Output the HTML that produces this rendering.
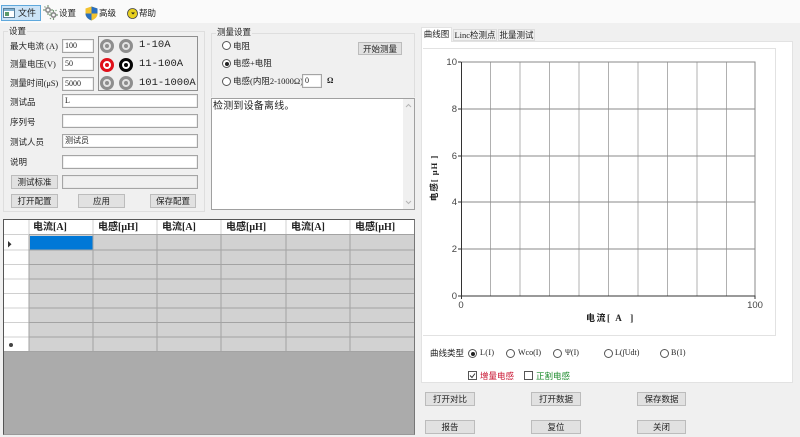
<!DOCTYPE html>
<html><head><meta charset="utf-8"><style>
html,body{margin:0;padding:0}
body{width:800px;height:437px;overflow:hidden;background:#f0f0f0;position:relative;font-family:"Liberation Serif","Noto Sans CJK SC",sans-serif;font-size:8.5px;color:#222}
#w{position:absolute;left:0;top:0;width:800px;height:437px;filter:blur(.35px)}
.a{position:absolute;white-space:nowrap}
.i{position:absolute;background:#fff;border:1px solid #a5a5a5;box-shadow:inset 0 0 0 .5px #e0e0e0;box-sizing:border-box;font-size:8px;line-height:11px;padding-left:2px;white-space:nowrap}
.b{position:absolute;background:#e1e1e1;border:1px solid #bcbcbc;box-sizing:border-box;text-align:center;font-size:8.5px;line-height:12px;white-space:nowrap}
.g{position:absolute;border:1px solid #dedede;box-sizing:border-box}
.r{position:absolute;width:9px;height:9px;border:1px solid #555;border-radius:50%;background:#fff;box-sizing:border-box}
.r.on:after{content:"";position:absolute;left:1.5px;top:1.5px;width:4px;height:4px;border-radius:50%;background:#222}
.c{position:absolute;width:14px;height:14px;border-radius:50%;box-sizing:border-box;border:3.5px solid #8e8e8e;background:#e4e4e4}
.c:after{content:"";position:absolute;left:1.5px;top:1.5px;width:4px;height:4px;border-radius:50%;background:#8e8e8e}
.c.red{border-color:#e0101a;background:#fff}.c.red:after{background:#e0101a}
.c.blk{border-color:#050505;background:#fff}.c.blk:after{background:#050505}
.h{position:absolute;top:220px;height:15px;font-weight:bold;font-size:10px;line-height:15px;white-space:nowrap}
</style></head><body><div id="w">
<div class="a" style="left:0;top:0;width:800px;height:23px;background:#fafafa"></div>
<div class="a" style="left:1px;top:5px;width:40px;height:16px;background:#cce4f7;border:1px solid #5fa8dc;box-sizing:border-box"></div>
<svg class="a" style="left:3px;top:8px" width="12" height="11"><rect x=".5" y=".5" width="11" height="9" fill="#fff" stroke="#5a7f9a"/><rect x="1" y="1" width="10" height="2" fill="#7fb0d0"/><rect x="2" y="4" width="4" height="4" fill="#5b9a6a"/></svg>
<div class="a" style="left:18px;top:7px;font-size:9px;line-height:12px">文件</div>
<svg class="a" style="left:43px;top:5px" width="15" height="15"><g fill="none" stroke="#8a8a8a" stroke-width="1.600"><circle cx="5" cy="5" r="2.200"/><circle cx="10.500" cy="10" r="2.200"/></g><g fill="none" stroke="#7a9a7a" stroke-width="1.200"><path d="M5 0v2M5 8v2M0 5h2M8 5h2M10.500 5v2M10.500 13v2M6 10h2M13 10h2M1.500 1.500l1 1M7.500 7.500l1 1M12.500 6l1-1M7 14l1-1"/></g></svg>
<div class="a" style="left:59px;top:7px;font-size:8.500px;line-height:12px">设置</div>
<svg class="a" style="left:85px;top:6px" width="13" height="15"><path d="M6.500 .5 L12.500 2.500 V8 C12.500 11 9.500 13.500 6.500 14.500 C3.500 13.500 .5 11 .5 8 V2.500Z" fill="#f2c230"/><path d="M6.500 .5 L12.500 2.500 V7.500 H6.500Z" fill="#2a6fc0"/><path d="M6.500 7.500 V14.500 C3.500 13.500 .5 11 .5 7.500Z" fill="#2a6fc0"/></svg>
<div class="a" style="left:99px;top:7px;font-size:8.500px;line-height:12px">高级</div>
<svg class="a" style="left:127px;top:8px" width="11" height="11"><circle cx="5.500" cy="5.500" r="5" fill="#e8d020" stroke="#444" stroke-width=".8"/><path d="M4 4.500h4l-2 2z" fill="#222"/></svg>
<div class="a" style="left:139px;top:7px;font-size:8.500px;line-height:12px">帮助</div>

<div class="g" style="left:3px;top:31px;width:202px;height:181px"></div>
<div class="a" style="left:8px;top:25px;background:#f0f0f0;padding:0 1px;line-height:12px">设置</div>
<div class="a" style="left:10px;top:40px;line-height:12px">最大电流 (A)</div>
<div class="i" style="left:62px;top:39px;width:32px;height:14px">100</div>
<div class="a" style="left:10px;top:58px;line-height:12px">测量电压(V)</div>
<div class="i" style="left:62px;top:57px;width:32px;height:14px">50</div>
<div class="a" style="left:10px;top:77px;line-height:12px;letter-spacing:-.1px">测量时间(μS)</div>
<div class="i" style="left:62px;top:77px;width:32px;height:14px">5000</div>
<div class="a" style="left:98px;top:36px;width:100px;height:55px;background:#efefef;border:1px solid #8f8f8f;box-sizing:border-box"></div>
<div class="c" style="left:100px;top:39px"></div><div class="c" style="left:119px;top:39px"></div>
<div class="c red" style="left:100px;top:58px"></div><div class="c blk" style="left:119px;top:58px"></div>
<div class="c" style="left:100px;top:76px"></div><div class="c" style="left:119px;top:76px"></div>
<div class="a" style="left:139px;top:38px;font-family:'Liberation Mono';font-size:10.500px;line-height:15px">1-10A</div>
<div class="a" style="left:139px;top:57px;font-family:'Liberation Mono';font-size:10.500px;line-height:15px">11-100A</div>
<div class="a" style="left:139px;top:76px;font-family:'Liberation Mono';font-size:10.500px;line-height:15px">101-1000A</div>
<div class="a" style="left:10px;top:96px;line-height:12px">测试品</div>
<div class="i" style="left:62px;top:94px;width:136px;height:14px">L</div>
<div class="a" style="left:10px;top:116px;line-height:12px">序列号</div>
<div class="i" style="left:62px;top:114px;width:136px;height:14px"></div>
<div class="a" style="left:10px;top:136px;line-height:12px">测试人员</div>
<div class="i" style="left:62px;top:134px;width:136px;height:14px">测试员</div>
<div class="a" style="left:10px;top:156px;line-height:12px">说明</div>
<div class="i" style="left:62px;top:155px;width:136px;height:14px"></div>
<div class="b" style="left:11px;top:175px;width:47px;height:14px">测试标准</div>
<div class="i" style="left:62px;top:175px;width:136px;height:14px;background:#f0f0f0"></div>
<div class="b" style="left:11px;top:194px;width:47px;height:14px">打开配置</div>
<div class="b" style="left:78px;top:194px;width:47px;height:14px">应用</div>
<div class="b" style="left:150px;top:194px;width:46px;height:14px">保存配置</div>

<div class="g" style="left:211px;top:33px;width:204px;height:64px;border-bottom:0"></div>
<div class="a" style="left:216px;top:26px;background:#f0f0f0;padding:0 1px;line-height:12px">测量设置</div>
<div class="r" style="left:222px;top:41px"></div><div class="a" style="left:233px;top:40px;line-height:12px">电阻</div>
<div class="r on" style="left:222px;top:59px"></div><div class="a" style="left:233px;top:57px;line-height:12px">电感+电阻</div>
<div class="r" style="left:222px;top:77px"></div><div class="a" style="left:233px;top:75px;line-height:12px">电感(内阻2-1000Ω)</div>
<div class="i" style="left:302px;top:74px;width:20px;height:14px">0</div>
<div class="a" style="left:327px;top:75px;line-height:12px;font-weight:bold;font-size:8px">Ω</div>
<div class="b" style="left:358px;top:42px;width:44px;height:13px">开始测量</div>

<div class="a" style="left:211px;top:98px;width:204px;height:112px;background:#fff;border:1px solid #a0a0a0;box-sizing:border-box"></div>
<div class="a" style="left:403px;top:99px;width:11px;height:110px;background:#f0f0f0"></div>
<svg class="a" style="left:404px;top:101px" width="9" height="108"><path d="M2 6l2.500-2.500L7 6M2 100l2.500 2.500L7 100" fill="none" stroke="#b5b5b5"/></svg>
<div class="a" style="left:213px;top:99px;font-size:10px;letter-spacing:.2px;line-height:15px">检测到设备离线。</div>

<div class="a" style="left:3px;top:219px;width:412px;height:216px;background:#ababab;border:1px solid #555;border-right-color:#777;border-bottom-color:#999;box-sizing:border-box"></div>
<div class="a" style="left:4px;top:220px;width:410px;height:15px;background:#fff"></div>
<div class="a" style="left:4px;top:235px;width:25px;height:117px;background:#fff"></div>
<div class="a" style="left:29px;top:235px;width:385px;height:117px;background:#d2d2d2"></div>
<div class="a" style="left:30px;top:236px;width:63px;height:14px;background:#0078d7"></div>
<svg class="a" style="left:4px;top:220px" width="411" height="133" shape-rendering="crispEdges" fill="none">
<path d="M0 14.500H25M0 30H25M0 44.500H25M0 59H25M0 73.500H25M0 88H25M0 102.500H25M0 117H25M25 0V15M89 0V15M153 0V15M217 0V15M282 0V15M346 0V15" stroke="#d0d0d0"/>
<path d="M25 14.500H410M25 30H410M25 44.500H410M25 59H410M25 73.500H410M25 88H410M25 102.500H410M25 117H410M0 131.500H410M25 15V132M89 15V132M153 15V132M217 15V132M282 15V132M346 15V132" stroke="#a3a3a3"/></svg>
<svg class="a" style="left:7px;top:241px" width="5" height="7"><path d="M1 0 L4.500 3.300 L1 6.500Z" fill="#333"/></svg>
<div class="a" style="left:9px;top:343px;width:4px;height:4px;border-radius:50%;background:#444"></div>
<div class="h" style="left:33px">电流[A]</div><div class="h" style="left:98px">电感[μH]</div>
<div class="h" style="left:162px">电流[A]</div><div class="h" style="left:226px">电感[μH]</div>
<div class="h" style="left:291px">电流[A]</div><div class="h" style="left:355px">电感[μH]</div>

<div class="a" style="left:421px;top:41px;width:372px;height:342px;background:#fff;border:1px solid #e2e2e2;box-sizing:border-box"></div>
<div class="a" style="left:421px;top:27px;width:31px;height:15px;background:#fff;border:1px solid #e2e2e2;border-bottom:0;box-sizing:border-box;text-align:center;line-height:13px;font-size:8.500px">曲线图</div>
<div class="a" style="left:453px;top:29px;width:44px;height:12px;background:#f0f0f0;border:1px solid #dcdcdc;box-sizing:border-box;text-align:center;line-height:11px;font-size:8.500px">Linc检测点</div>
<div class="a" style="left:498px;top:29px;width:37px;height:12px;background:#f0f0f0;border:1px solid #dcdcdc;box-sizing:border-box;text-align:center;line-height:11px;font-size:8.500px">批量测试</div>
<div class="a" style="left:423px;top:48px;width:353px;height:288px;border:1px solid #e2e2e2;border-left:0;box-sizing:border-box"></div>

<svg class="a" style="left:440px;top:50px" width="330" height="270" font-family="Liberation Sans" font-size="9.500" fill="#444">
<g fill="none" stroke="#b0b0b0" stroke-width="1" shape-rendering="crispEdges"><path d="M50.500 12V246M80 12V246M109.500 12V246M139 12V246M168.500 12V246M198 12V246M227.500 12V246M257 12V246M286.500 12V246"/></g>
<g fill="none" stroke="#8a8a8a" stroke-width="1" shape-rendering="crispEdges"><path d="M21 12H315V246M21 59H315M21 106H315M21 152H315M21 199H315"/></g>
<path d="M21.500 12V249M21 246H315V249M18 12h3M18 59h3M18 106h3M18 152h3M18 199h3M18 246h3" stroke="#333" stroke-width="1.200" fill="none" shape-rendering="crispEdges"/>
<text x="17" y="15" text-anchor="end">10</text><text x="17" y="62" text-anchor="end">8</text><text x="17" y="109" text-anchor="end">6</text><text x="17" y="155" text-anchor="end">4</text><text x="17" y="202" text-anchor="end">2</text><text x="17" y="249" text-anchor="end">0</text>
<text x="21" y="258" text-anchor="middle">0</text><text x="315" y="258" text-anchor="middle">100</text>
</svg>
<div class="a" style="left:586px;top:312px;font-weight:bold;font-size:9px;line-height:12px;letter-spacing:1.500px">电流[ A &nbsp;]</div>
<div class="a" style="left:399px;top:172px;width:70px;text-align:center;font-weight:bold;font-size:8.500px;line-height:12px;letter-spacing:1px;transform:rotate(-90deg)">电感[ μH ]</div>

<div class="a" style="left:430px;top:347px;line-height:12px">曲线类型</div>
<div class="r on" style="left:468px;top:349px"></div><div class="a" style="left:480px;top:347px;line-height:12px;font-size:8px;letter-spacing:.4px">L(I)</div>
<div class="r" style="left:506px;top:349px"></div><div class="a" style="left:518px;top:347px;line-height:12px;font-size:8px">Wco(I)</div>
<div class="r" style="left:553px;top:349px"></div><div class="a" style="left:565px;top:347px;line-height:12px;font-size:8px">Ψ(I)</div>
<div class="r" style="left:604px;top:349px"></div><div class="a" style="left:615px;top:347px;line-height:12px;font-size:8px">L(∫Udt)</div>
<div class="r" style="left:660px;top:349px"></div><div class="a" style="left:671px;top:347px;line-height:12px;font-size:8px;letter-spacing:.4px">B(I)</div>
<div class="a" style="left:468px;top:371px;width:9px;height:9px;border:1px solid #555;box-sizing:border-box"></div>
<svg class="a" style="left:468px;top:371px" width="9" height="9"><path d="M2 4.500l2 2 3-4" fill="none" stroke="#333"/></svg>
<div class="a" style="left:480px;top:370px;line-height:12px;color:#c8102e">增量电感</div>
<div class="a" style="left:524px;top:371px;width:9px;height:9px;border:1px solid #555;box-sizing:border-box"></div>
<div class="a" style="left:536px;top:370px;line-height:12px;color:#1a8a2a">正割电感</div>

<div class="b" style="left:425px;top:392px;width:50px;height:14px">打开对比</div>
<div class="b" style="left:531px;top:392px;width:50px;height:14px">打开数据</div>
<div class="b" style="left:637px;top:392px;width:49px;height:14px">保存数据</div>
<div class="b" style="left:425px;top:420px;width:50px;height:14px">报告</div>
<div class="b" style="left:531px;top:420px;width:50px;height:14px">复位</div>
<div class="b" style="left:637px;top:420px;width:49px;height:14px">关闭</div>
</div></body></html>
